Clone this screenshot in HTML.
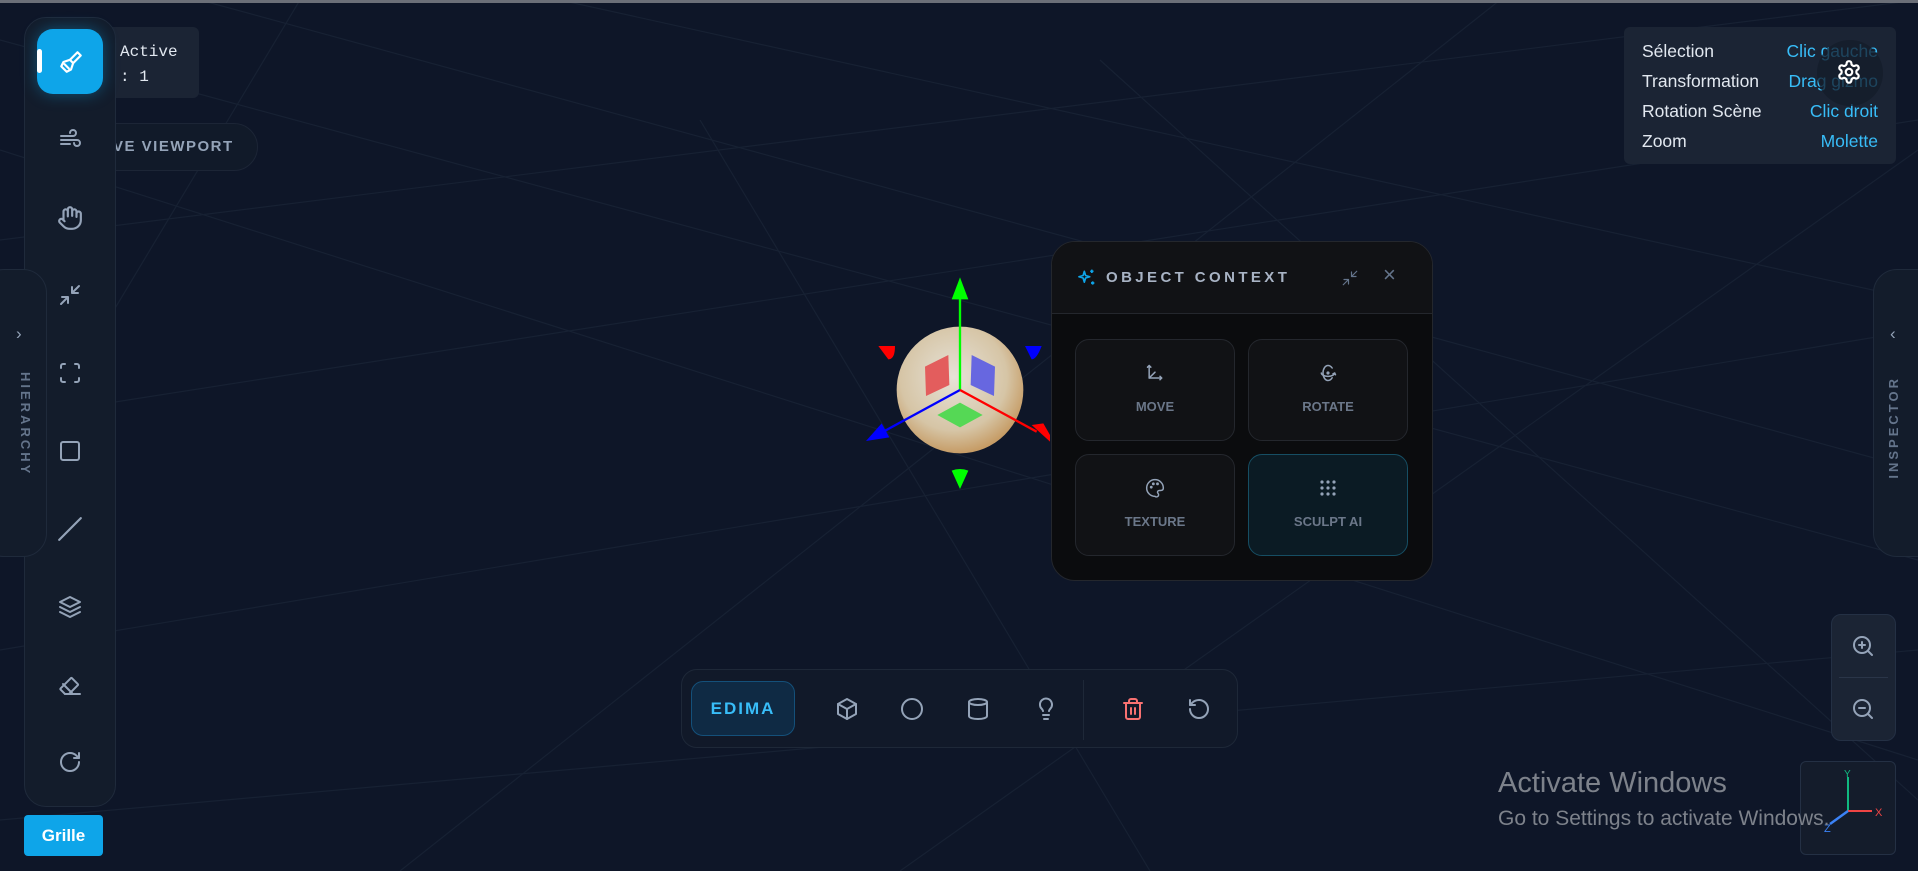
<!DOCTYPE html>
<html><head><meta charset="utf-8"><style>
*{box-sizing:border-box;margin:0;padding:0}
body{width:1918px;height:871px;overflow:hidden;background:#0f172a;font-family:"Liberation Sans",sans-serif;position:relative}
.abs{position:absolute}
svg.ic{fill:none;stroke:#94a3b8;stroke-width:2;stroke-linecap:round;stroke-linejoin:round}
</style></head><body>
<svg class="abs" style="left:0;top:0" width="1918" height="871">
<rect width="1918" height="871" fill="#0e1628"/>
<g stroke="#172133" stroke-width="1.2">
<line x1="0" y1="240" x2="1918" y2="0"/>
<line x1="0" y1="420" x2="1918" y2="120"/>
<line x1="0" y1="650" x2="1918" y2="330"/>
<line x1="0" y1="40" x2="1918" y2="560"/>
<line x1="200" y1="0" x2="1918" y2="470"/>
<line x1="560" y1="0" x2="1918" y2="300"/>
<line x1="0" y1="150" x2="1918" y2="760"/>
<line x1="700" y1="120" x2="1150" y2="871"/>
<line x1="1100" y1="60" x2="1918" y2="800"/>
<line x1="1500" y1="0" x2="400" y2="871"/>
<line x1="1918" y1="150" x2="900" y2="871"/>
<line x1="300" y1="0" x2="0" y2="500"/>
<line x1="0" y1="820" x2="1918" y2="650"/>
</g>
</svg>
<div class="abs" style="left:0;top:0;width:1918px;height:3px;background:#6b6f78"></div>

<div class="abs" style="left:104px;top:27px;width:95px;height:71px;background:#1b2434;border-radius:6px;font-family:'Liberation Mono',monospace;color:#e2e8f0;font-size:16px;line-height:25px;padding:13px 0 0 16px">Active<br>: 1</div>
<div class="abs" style="left:60px;top:123px;width:198px;height:48px;background:#111a29;border:1px solid #1c2536;border-radius:24px;color:#94a3b8;font-weight:bold;font-size:15px;letter-spacing:1.5px;line-height:46px;padding-left:52px">VE VIEWPORT</div>

<!-- toolbar -->
<div class="abs" style="left:24px;top:17px;width:92px;height:790px;background:#131c2b;border:1px solid #1f2a3b;border-radius:22px"></div>

<!-- hierarchy tab -->
<div class="abs" style="left:-20px;top:269px;width:67px;height:288px;background:#131c2b;border:1px solid #1f2a3b;border-radius:24px"></div>
<div class="abs" style="left:16px;top:324px;color:#94a3b8;font-size:17px">›</div>
<div class="abs" style="left:13px;top:372px;width:20px;color:#64748b;font-weight:bold;font-size:13px;letter-spacing:3px;writing-mode:vertical-rl">HIERARCHY</div>

<div class="abs" style="left:37px;top:29px;width:66px;height:65px;background:#0ea5e9;border-radius:16px;box-shadow:0 0 16px rgba(14,165,233,.4)"></div>
<div class="abs" style="left:37px;top:49px;width:5px;height:24px;background:#fff;border-radius:3px"></div>
<svg class="abs ic" style="left:58px;top:49px;stroke:#fff" width="26" height="26" viewBox="0 0 24 24"><path d="M18 3l3 3-7 7-3-3z"/><path d="M11 10l-6 2-2 4 5 5 4-2 2-6"/><path d="M6 14l4 4"/></svg>
<svg class="abs ic" style="left:58px;top:128px" width="24" height="24" viewBox="0 0 24 24"><path d="M3 8h12a3 3 0 1 0-3-3"/><path d="M3 12h16a3 3 0 1 1-3 3"/><path d="M3 16h9"/></svg>
<svg class="abs ic" style="left:57px;top:205px" width="26" height="26" viewBox="0 0 24 24"><path d="M18 11V6a2 2 0 0 0-4 0M14 10V4a2 2 0 0 0-4 0v2M10 10.5V6a2 2 0 0 0-4 0v8"/><path d="M18 8a2 2 0 1 1 4 0v6a8 8 0 0 1-8 8h-2c-2.8 0-4.5-.9-6-2.4l-3.6-3.6a2 2 0 0 1 2.8-2.8L7 15"/></svg>
<svg class="abs ic" style="left:58px;top:283px" width="24" height="24" viewBox="0 0 24 24"><path d="M4 14h6v6M20 10h-6V4M14 10l7-7M3 21l7-7"/></svg>
<svg class="abs ic" style="left:58px;top:361px" width="24" height="24" viewBox="0 0 24 24"><path d="M3 7V5a2 2 0 0 1 2-2h2M17 3h2a2 2 0 0 1 2 2v2M21 17v2a2 2 0 0 1-2 2h-2M7 21H5a2 2 0 0 1-2-2v-2"/></svg>
<svg class="abs ic" style="left:58px;top:439px" width="24" height="24" viewBox="0 0 24 24"><rect x="3" y="3" width="18" height="18" rx="2"/></svg>
<svg class="abs ic" style="left:57px;top:516px" width="26" height="26" viewBox="0 0 24 24"><path d="M2 22L22 2"/></svg>
<svg class="abs ic" style="left:58px;top:595px" width="24" height="24" viewBox="0 0 24 24"><path d="M12 2L2 7l10 5 10-5z"/><path d="M2 12l10 5 10-5"/><path d="M2 17l10 5 10-5"/></svg>
<svg class="abs ic" style="left:58px;top:673px" width="24" height="24" viewBox="0 0 24 24"><path d="M7 21l-4.3-4.3a1 1 0 0 1 0-1.4l10-10a1 1 0 0 1 1.4 0l5.6 5.6a1 1 0 0 1 0 1.4L11 21"/><path d="M22 21H7M5 11l9 9"/></svg>
<svg class="abs ic" style="left:58px;top:750px" width="24" height="24" viewBox="0 0 24 24"><path d="M21 12a9 9 0 1 1-9-9c2.5 0 4.8 1 6.5 2.7L21 8"/><path d="M21 3v5h-5"/></svg>
<div class="abs" style="left:24px;top:815px;width:79px;height:41px;background:#0ea5e9;border-radius:4px;color:#fff;font-weight:bold;font-size:17px;text-align:center;line-height:41px">Grille</div>

<!-- gizmo -->
<svg class="abs" style="left:850px;top:260px" width="220" height="240" viewBox="0 0 660 720">
<defs><radialGradient id="sg" cx="45%" cy="40%" r="60%"><stop offset="0" stop-color="#e6e2d8"/><stop offset=".7" stop-color="#d6c5a6"/><stop offset="1" stop-color="#c69c66"/></radialGradient></defs>
<circle cx="330" cy="390" r="190" fill="url(#sg)"/>
<polygon points="225,320 295,285 298,375 228,408" fill="#e35d5d"/>
<polygon points="365,285 435,320 432,408 362,375" fill="#6767e0"/>
<polygon points="262,465 330,428 398,465 330,502" fill="#55d855"/>
<line x1="330" y1="390" x2="330" y2="110" stroke="#00ff00" stroke-width="7"/>
<polygon points="330,52 305,118 355,118" fill="#00ff00"/>
<line x1="330" y1="390" x2="100" y2="515" stroke="#0000ff" stroke-width="7"/>
<polygon points="48,543 95,490 118,532" fill="#0000ff"/>
<line x1="330" y1="390" x2="560" y2="515" stroke="#ff0000" stroke-width="7"/>
<polygon points="600,545 545,495 580,490 600,525" fill="#ff0000"/>
<path d="M85 258h50q0 40-20 40z" fill="#ff0000"/>
<path d="M525 258h50q-15 40-30 40z" fill="#0000ff"/>
<path d="M305 632q25-10 50 0l-25 55z" fill="#00ff00"/>
</svg>

<!-- object context panel -->
<div class="abs" style="left:1051px;top:241px;width:382px;height:340px;background:#0b0c0e;border:1px solid #24272d;border-radius:24px;overflow:hidden">
<div style="height:72px;background:#111215;border-bottom:1px solid #24272d;position:relative">
<svg class="abs" style="left:24px;top:26px;fill:none;stroke:#0ea5e9;stroke-width:2;stroke-linejoin:round" width="20" height="20" viewBox="0 0 24 24"><path d="M10 4l1.5 5 5 1.5-5 1.5L10 17l-1.5-5-5-1.5 5-1.5z"/><path d="M19 2v4M17 4h4M20 16v4M18 18h4"/></svg>
<div class="abs" style="left:54px;top:27px;color:#a8b3c4;font-weight:bold;font-size:15px;letter-spacing:3.4px">OBJECT CONTEXT</div>
<svg class="abs ic" style="left:289px;top:27px;stroke:#64748b;stroke-width:1.6" width="18" height="18" viewBox="0 0 24 24"><path d="M4 14h6v6M20 10h-6V4M14 10l7-7M3 21l7-7"/></svg>
<div class="abs" style="left:331px;top:20px;color:#64748b;font-size:22px">×</div>
</div>
</div>
<div class="abs" style="left:1075px;top:339px;width:160px;height:102px;background:#111215;border:1px solid #24272d;border-radius:14px"></div>
<div class="abs" style="left:1248px;top:339px;width:160px;height:102px;background:#111215;border:1px solid #24272d;border-radius:14px"></div>
<div class="abs" style="left:1075px;top:454px;width:160px;height:102px;background:#111215;border:1px solid #24272d;border-radius:14px"></div>
<div class="abs" style="left:1248px;top:454px;width:160px;height:102px;background:#0b1b24;border:1px solid #164e63;border-radius:14px"></div>
<svg class="abs ic" style="left:1145px;top:363px;stroke-width:1.8" width="20" height="20" viewBox="0 0 24 24"><path d="M5 3v15h15"/><path d="M3 5l2-2 2 2M18 16l2 2-2 2M5 18l7-7"/></svg>
<svg class="abs ic" style="left:1318px;top:363px;stroke-width:1.8" width="20" height="20" viewBox="0 0 24 24"><circle cx="12" cy="12" r="1"/><path d="M20 12c0 2-3.6 4-8 4S4 14 4 12"/><path d="M17 6c-1.4-2-3.4-3-5-3-3.3 0-6 4-6 9s2.7 9 6 9c2 0 3.8-1.3 5-3.3"/><path d="M18 13l2-1 1 2"/></svg>
<svg class="abs ic" style="left:1145px;top:478px;stroke-width:1.8" width="20" height="20" viewBox="0 0 24 24"><path d="M12 22a10 10 0 1 1 10-10c0 2-1.5 3-3.5 3H17a2 2 0 0 0-1.5 3.3A2 2 0 0 1 12 22z"/><circle cx="7.5" cy="11" r=".8" fill="#94a3b8"/><circle cx="10" cy="7" r=".8" fill="#94a3b8"/><circle cx="15" cy="7" r=".8" fill="#94a3b8"/></svg>
<svg class="abs" style="left:1319px;top:479px;fill:#94a3b8" width="18" height="18" viewBox="0 0 18 18"><circle cx="3" cy="3" r="1.6"/><circle cx="9" cy="3" r="1.6"/><circle cx="15" cy="3" r="1.6"/><circle cx="3" cy="9" r="1.6"/><circle cx="9" cy="9" r="1.6"/><circle cx="15" cy="9" r="1.6"/><circle cx="3" cy="15" r="1.6"/><circle cx="9" cy="15" r="1.6"/><circle cx="15" cy="15" r="1.6"/></svg>
<div class="abs" style="left:1075px;top:399px;width:160px;text-align:center;color:#6b7789;font-weight:bold;font-size:13px">MOVE</div>
<div class="abs" style="left:1248px;top:399px;width:160px;text-align:center;color:#6b7789;font-weight:bold;font-size:13px">ROTATE</div>
<div class="abs" style="left:1075px;top:514px;width:160px;text-align:center;color:#6b7789;font-weight:bold;font-size:13px">TEXTURE</div>
<div class="abs" style="left:1248px;top:514px;width:160px;text-align:center;color:#6b7789;font-weight:bold;font-size:13px">SCULPT AI</div>

<!-- bottom toolbar -->
<div class="abs" style="left:681px;top:669px;width:557px;height:79px;background:#111929;border:1px solid #1e2838;border-radius:16px"></div>
<div class="abs" style="left:691px;top:681px;width:104px;height:55px;background:#0f2a44;border:1px solid #14507a;border-radius:12px;color:#38bdf8;font-weight:bold;font-size:17px;letter-spacing:2px;text-align:center;line-height:54px">EDIMA</div>
<div class="abs" style="left:1083px;top:680px;width:1px;height:60px;background:#1e2838"></div>
<svg class="abs ic" style="left:835px;top:697px" width="24" height="24" viewBox="0 0 24 24"><path d="M12 2l9 5v10l-9 5-9-5V7z"/><path d="M3 7l9 5 9-5M12 12v10"/></svg>
<svg class="abs ic" style="left:900px;top:697px" width="24" height="24" viewBox="0 0 24 24"><circle cx="12" cy="12" r="10"/></svg>
<svg class="abs ic" style="left:966px;top:697px" width="24" height="24" viewBox="0 0 24 24"><ellipse cx="12" cy="5" rx="9" ry="3"/><path d="M3 5v14c0 1.7 4 3 9 3s9-1.3 9-3V5"/></svg>
<svg class="abs ic" style="left:1034px;top:697px" width="24" height="24" viewBox="0 0 24 24"><path d="M9 18h6M10 22h4M15 14c.2-1 .7-1.7 1.5-2.5A6 6 0 1 0 6 8c0 1 .2 2.2 1.5 3.5.7.7 1.3 1.5 1.5 2.5"/></svg>
<svg class="abs ic" style="left:1121px;top:697px;stroke:#f87171" width="24" height="24" viewBox="0 0 24 24"><path d="M3 6h18M19 6v14a2 2 0 0 1-2 2H7a2 2 0 0 1-2-2V6M8 6V4a2 2 0 0 1 2-2h4a2 2 0 0 1 2 2v2M10 11v6M14 11v6"/></svg>
<svg class="abs ic" style="left:1187px;top:697px" width="24" height="24" viewBox="0 0 24 24"><path d="M3 12a9 9 0 1 0 9-9 9.8 9.8 0 0 0-6.7 2.7L3 8"/><path d="M3 3v5h5"/></svg>

<!-- shortcuts -->
<div class="abs" style="left:1624px;top:27px;width:272px;height:137px;background:#1b2434;border-radius:6px;font-size:17.5px;line-height:30px;padding:9px 18px 0 18px">
<div style="display:flex;justify-content:space-between;color:#e2e8f0"><span>Sélection</span><span style="color:#38bdf8">Clic gauche</span></div>
<div style="display:flex;justify-content:space-between;color:#e2e8f0"><span>Transformation</span><span style="color:#38bdf8">Drag gizmo</span></div>
<div style="display:flex;justify-content:space-between;color:#e2e8f0"><span>Rotation Scène</span><span style="color:#38bdf8">Clic droit</span></div>
<div style="display:flex;justify-content:space-between;color:#e2e8f0"><span>Zoom</span><span style="color:#38bdf8">Molette</span></div>
</div>
<div class="abs" style="left:1817px;top:40px;width:66px;height:66px;border-radius:50%;background:rgba(20,28,42,.75)"></div>
<svg class="abs ic" style="left:1836px;top:59px;stroke:#fff" width="26" height="26" viewBox="0 0 24 24"><path d="M12.2 2h-.4a2 2 0 0 0-2 2v.2a2 2 0 0 1-1 1.7l-.4.3a2 2 0 0 1-2 0l-.2-.1a2 2 0 0 0-2.7.7l-.2.4a2 2 0 0 0 .7 2.7l.2.1a2 2 0 0 1 1 1.7v.5a2 2 0 0 1-1 1.7l-.2.1a2 2 0 0 0-.7 2.7l.2.4a2 2 0 0 0 2.7.7l.2-.1a2 2 0 0 1 2 0l.4.3a2 2 0 0 1 1 1.7v.2a2 2 0 0 0 2 2h.4a2 2 0 0 0 2-2v-.2a2 2 0 0 1 1-1.7l.4-.3a2 2 0 0 1 2 0l.2.1a2 2 0 0 0 2.7-.7l.2-.4a2 2 0 0 0-.7-2.7l-.2-.1a2 2 0 0 1-1-1.7v-.5a2 2 0 0 1 1-1.7l.2-.1a2 2 0 0 0 .7-2.7l-.2-.4a2 2 0 0 0-2.7-.7l-.2.1a2 2 0 0 1-2 0l-.4-.3a2 2 0 0 1-1-1.7V4a2 2 0 0 0-2-2z"/><circle cx="12" cy="12" r="3"/></svg>

<!-- inspector tab -->
<div class="abs" style="left:1873px;top:269px;width:70px;height:288px;background:#131c2b;border:1px solid #1f2a3b;border-radius:24px"></div>
<div class="abs" style="left:1890px;top:324px;color:#94a3b8;font-size:17px">‹</div>
<div class="abs" style="left:1886px;top:376px;color:#64748b;font-weight:bold;font-size:13px;letter-spacing:3px;writing-mode:vertical-rl;transform:rotate(180deg)">INSPECTOR</div>

<!-- zoom controls -->
<div class="abs" style="left:1831px;top:614px;width:65px;height:127px;background:#1b2434;border:1px solid #243044;border-radius:10px"></div>
<div class="abs" style="left:1839px;top:677px;width:49px;height:1px;background:#2a3548"></div>
<svg class="abs ic" style="left:1851px;top:634px" width="24" height="24" viewBox="0 0 24 24"><circle cx="11" cy="11" r="8"/><path d="M21 21l-4.3-4.3M11 8v6M8 11h6"/></svg>
<svg class="abs ic" style="left:1851px;top:697px" width="24" height="24" viewBox="0 0 24 24"><circle cx="11" cy="11" r="8"/><path d="M21 21l-4.3-4.3M8 11h6"/></svg>

<!-- axis box -->
<div class="abs" style="left:1800px;top:761px;width:96px;height:94px;background:#141c2b;border:1px solid #243044;border-radius:6px"></div>
<svg class="abs" style="left:1800px;top:761px" width="96" height="94">
<line x1="48" y1="50" x2="48" y2="16" stroke="#10b981" stroke-width="2"/>
<line x1="48" y1="50" x2="72" y2="50" stroke="#ef4444" stroke-width="2"/>
<line x1="48" y1="50" x2="30" y2="63" stroke="#3b82f6" stroke-width="2.5"/>
<text x="44" y="16" font-size="10" fill="#10b981" font-family="Liberation Sans">Y</text>
<text x="75" y="55" font-size="11" fill="#ef4444" font-family="Liberation Sans">X</text>
<text x="24" y="71" font-size="11" fill="#3b82f6" font-family="Liberation Sans">Z</text>
</svg>

<!-- activate windows -->
<div class="abs" style="left:1498px;top:767px;color:#7d828b;font-size:29px">Activate Windows</div>
<div class="abs" style="left:1498px;top:807px;color:#7d828b;font-size:21px">Go to Settings to activate Windows.</div>
</body></html>
